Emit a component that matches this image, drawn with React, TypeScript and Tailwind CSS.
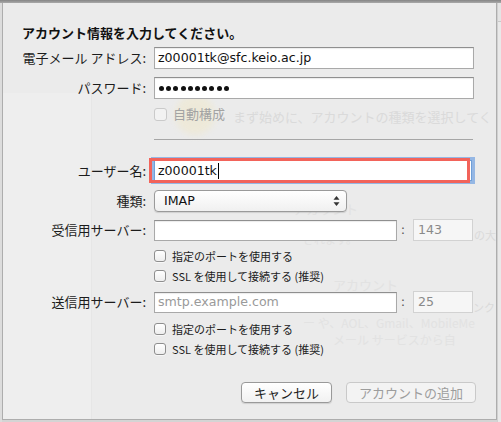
import React from "react";

const JP = { fontFamily: '"Noto Sans CJK JP", "Noto Sans", sans-serif' };
const LAT = { fontFamily: '"DejaVu Sans", "Noto Sans CJK JP", sans-serif' };

function Checkbox({ disabled, small }: { disabled?: boolean; small?: boolean }) {
  const size = small ? "w-[12px] h-[12px]" : "w-[13px] h-[13px]";
  return (
    <div
      className={
        disabled
          ? `${size} rounded-[3px] border border-[#cacaca] bg-[#f2f2f2] shrink-0`
          : `${size} rounded-[3px] border border-[#8e8e8e] bg-gradient-to-b from-white to-[#eeeeee] shadow-[0_1px_0_rgba(255,255,255,0.6)] shrink-0`
      }
    />
  );
}

function Label({ children }: { children: React.ReactNode }) {
  return (
    <div className="w-[143px] shrink-0 text-right text-[13px] leading-[16px] text-[#1c1c1c]" style={JP}>
      {children}
    </div>
  );
}

function SmallCheckRow({ text }: { text: string }) {
  return (
    <div className="flex items-center h-[20px] pl-[151px]">
      <Checkbox small />
      <span className="ml-[6px] text-[11px] leading-[14px] text-[#1c1c1c]" style={JP}>
        {text}
      </span>
    </div>
  );
}

function TextInput({
  value,
  placeholder,
  width,
  height = 22,
}: {
  value?: string;
  placeholder?: string;
  width: number;
  height?: number;
}) {
  return (
    <div
      className="shrink-0 border border-[#a9a9a9] border-t-[#8f8f8f] bg-white shadow-[inset_0_1px_1px_rgba(0,0,0,0.08)] flex items-center pl-[3px]"
      style={{ width, height }}
    >
      {value ? (
        <span className="text-[12.6px] leading-[16px] text-[#111]" style={LAT}>
          {value}
        </span>
      ) : placeholder ? (
        <span className="text-[12.6px] leading-[16px] text-[#9a9a9a]" style={LAT}>
          {placeholder}
        </span>
      ) : null}
    </div>
  );
}

function PortField({ value }: { value: string }) {
  return (
    <div className="shrink-0 w-[60px] h-[22px] border border-[#d2d2d2] bg-[#f6f6f6] flex items-center pl-[4px]">
      <span className="text-[12.6px] leading-[16px] text-[#8a8a8a]" style={LAT}>
        {value}
      </span>
    </div>
  );
}

function ServerRow({ label, placeholder, port }: { label: string; placeholder?: string; port: string }) {
  return (
    <div className="flex items-center">
      <Label>{label}</Label>
      <div className="ml-[8px]">
        <TextInput width={243} height={21} placeholder={placeholder} />
      </div>
      <span className="w-[12px] text-center text-[13px] leading-[16px] text-[#555]" style={LAT}>
        :
      </span>
      <div className="ml-[4px]">
        <PortField value={port} />
      </div>
    </div>
  );
}

export default function App() {
  return (
    <div className="w-[501px] h-[422px] flex flex-col overflow-hidden bg-[#d4d4d4]" style={JP}>
      <div className="h-[3px] bg-gradient-to-b from-[#858585] to-[#a9a9a9] shrink-0" />
      <div className="flex flex-1">
        <div className="w-[2px] bg-[#dcdcdc] shrink-0" />
        {/* sheet */}
        <div className="relative w-[495px] h-[417px] border-l border-r border-b border-[#adadad] bg-[#ebebeb] overflow-hidden shrink-0">
          {/* faint background window showing through the sheet */}
          <div className="absolute inset-0 pointer-events-none">
            <div className="absolute left-0 top-[90px] w-[89px] bottom-0 bg-[#eeeeee] border-r border-[#e6e6e6]" />
            <div className="absolute left-[172px] top-[92px] w-[40px] h-[40px] rounded-full bg-[#efe9d2] opacity-70 blur-[3px]" />
            <div className="absolute left-[230px] top-[106px] text-[13px] leading-[16px] text-[#dadada] whitespace-nowrap">
              まず始めに、アカウントの種類を選択してく
            </div>
            <div className="absolute left-[290px] top-[198px] text-[13px] leading-[16px] text-[#e2e2e2] whitespace-nowrap">
              アカウント
            </div>
            <div className="absolute left-[471px] top-[225px] text-[11px] leading-[14px] text-[#dadada] whitespace-nowrap">
              の大
            </div>
            <div className="absolute left-[300px] top-[230px] text-[11px] leading-[12px] text-[#e2e2e2] whitespace-nowrap">
              されます。
            </div>
            <div className="absolute left-[330px] top-[274px] text-[13px] leading-[16px] text-[#e2e2e2] whitespace-nowrap">
              アカウント
            </div>
            <div className="absolute left-[470px] top-[297px] text-[11px] leading-[14px] text-[#dadada] whitespace-nowrap">
              ンク
            </div>
            <div className="absolute left-[300px] top-[312px] text-[12px] leading-[16px] text-[#e2e2e2] whitespace-nowrap">
              ー や、AOL、Gmail、MobileMe
            </div>
            <div className="absolute left-[330px] top-[329px] text-[12px] leading-[16px] text-[#e2e2e2] whitespace-nowrap">
              メール サービスから自
            </div>
          </div>

          {/* form */}
          <div className="relative flex flex-col pt-[22px]">
            <div className="pl-[19px] text-[13px] leading-[16px] font-bold text-[#111]">
              アカウント情報を入力してください。
            </div>

            <div className="flex items-center gap-[8px] mt-[6px]">
              <Label>電子メール アドレス:</Label>
              <TextInput value="z00001tk@sfc.keio.ac.jp" width={320} />
            </div>

            <div className="flex items-center gap-[8px] mt-[8px]">
              <Label>パスワード:</Label>
              <div className="w-[320px] h-[22px] border border-[#a9a9a9] border-t-[#8f8f8f] bg-white shadow-[inset_0_1px_1px_rgba(0,0,0,0.08)] flex items-center pl-[4px] gap-[2.2px]">
                {Array.from({ length: 10 }).map((_, i) => (
                  <span key={i} className="w-[5px] h-[5px] rounded-full bg-[#111]" />
                ))}
              </div>
            </div>

            <div className="mt-[5px] flex items-center h-[20px] pl-[151px]">
              <Checkbox disabled />
              <span className="ml-[6px] text-[13px] leading-[16px] text-[#a3a3a3]">自動構成</span>
            </div>

            <div className="ml-[151px] mt-[15px] w-[319px] h-px bg-[#a6a6a6]" />

            <div className="flex items-center gap-[8px] mt-[20px]">
              <Label>ユーザー名:</Label>
              <div className="relative">
                <div className="w-[318px] h-[21px] border border-[#6f9fd8] bg-white shadow-[0_0_0_3px_rgba(120,165,225,0.75)] flex items-center pl-[3px]">
                  <span className="text-[12.6px] leading-[16px] text-[#111]" style={LAT}>
                    z00001tk
                  </span>
                  <span className="ml-[1px] w-px h-[16px] bg-black" />
                </div>
                <div className="absolute left-[-5px] top-[-2px] w-[321px] h-[25px] border-[3.5px] border-[#f2635a] pointer-events-none" />
              </div>
            </div>

            <div className="flex items-center gap-[8px] mt-[9px]">
              <Label>種類:</Label>
              <div className="w-[193px] h-[22px] rounded-[4px] border border-[#9a9a9a] bg-gradient-to-b from-white to-[#f0f0f0] shadow-[0_1px_1px_rgba(0,0,0,0.12)] flex items-center justify-between pl-[9px] pr-[6px]">
                <span className="text-[12.6px] leading-[16px] text-[#111]" style={LAT}>
                  IMAP
                </span>
                <svg width="7" height="12" viewBox="0 0 7 12">
                  <path d="M3.5 1 L6.5 4.8 L0.5 4.8 Z" fill="#333" />
                  <path d="M3.5 11 L6.5 7.2 L0.5 7.2 Z" fill="#333" />
                </svg>
              </div>
            </div>

            <div className="mt-[7px]">
              <ServerRow label="受信用サーバー:" port="143" />
            </div>

            <div className="mt-[5px]">
              <SmallCheckRow text="指定のポートを使用する" />
              <SmallCheckRow text="SSL を使用して接続する (推奨)" />
            </div>

            <div className="mt-[5px]">
              <ServerRow label="送信用サーバー:" placeholder="smtp.example.com" port="25" />
            </div>

            <div className="mt-[6px]">
              <SmallCheckRow text="指定のポートを使用する" />
              <SmallCheckRow text="SSL を使用して接続する (推奨)" />
            </div>

            <div className="flex justify-end gap-[14px] pr-[20px] mt-[23px]">
              <div className="w-[91px] h-[21px] rounded-[4px] border border-[#999] bg-gradient-to-b from-white to-[#f1f1f1] shadow-[0_1px_1px_rgba(0,0,0,0.12)] flex items-center justify-center text-[13px] leading-[16px] text-[#1c1c1c]">
                キャンセル
              </div>
              <div className="w-[130px] h-[21px] rounded-[4px] border border-[#c9c9c9] bg-[#f3f3f3] flex items-center justify-center text-[13px] leading-[16px] text-[#9d9d9d]">
                アカウントの追加
              </div>
            </div>
          </div>
        </div>
        {/* edge of the window behind the sheet */}
        <div className="flex-1 flex flex-col bg-[#e9e9e9] border-l border-[#d0d0d0]">
          <div className="h-[19px] bg-[#e4e4e4] border-b border-[#c8c8c8]" />
          <div className="flex-1" />
        </div>
      </div>
    </div>
  );
}
